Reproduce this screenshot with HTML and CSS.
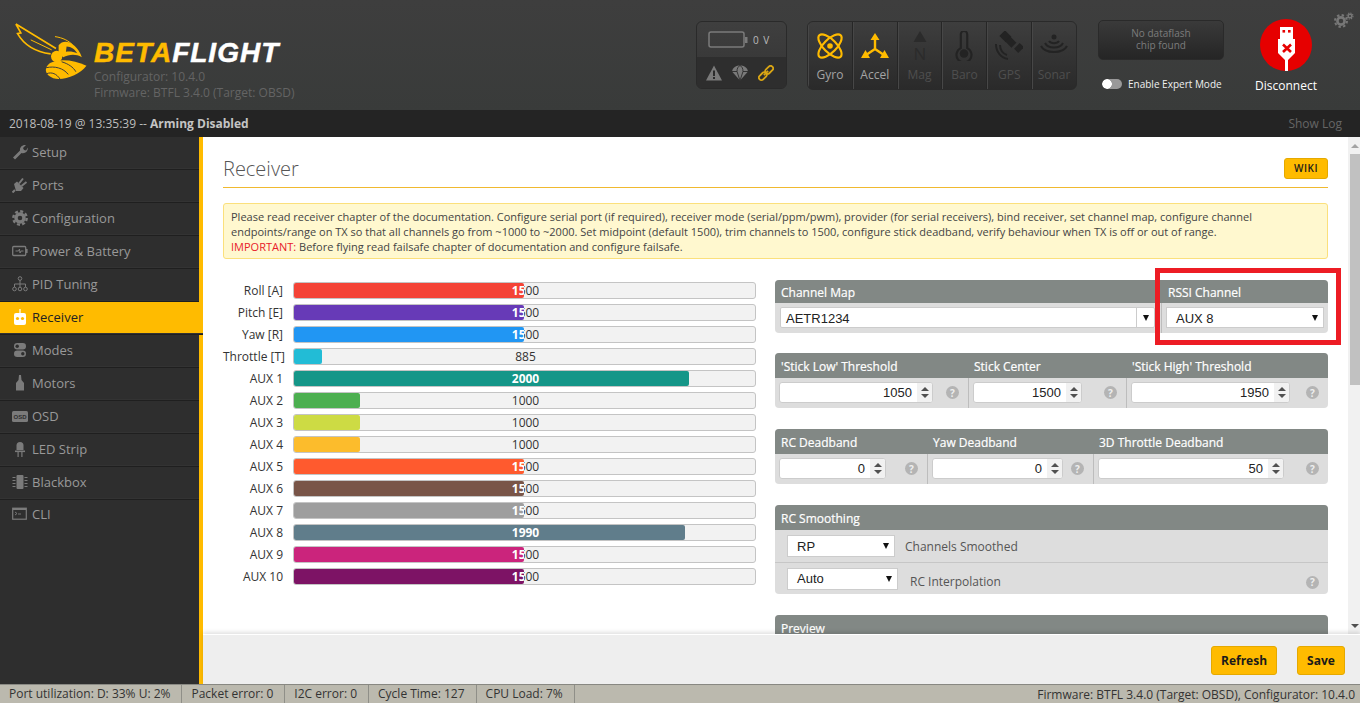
FILE: index.html
```html
<!DOCTYPE html>
<html lang="en">
<head>
    <title>Betaflight Configurator</title>
    <meta charset="UTF-8">
    <link rel="stylesheet" href="styles.css">
</head>
<body>
    <div class="header">
        <div class="brand">
            <svg class="bee" viewBox="36 60 240 190">
                <path d="M47 72 L168 146 M47 72 L62 99 L52 101 C70 132 105 156 152 162" fill="none" stroke="#ffbb00" stroke-width="5"/>
                <path d="M92 120 L155 150" fill="none" stroke="#ffbb00" stroke-width="3"/>
                <path d="M165 110 C190 114 205 122 218 135" fill="none" stroke="#ffbb00" stroke-width="3"/>
                <path d="M176 136 C195 112 232 132 246 172 C226 160 206 164 190 172 L176 160 Z" fill="#ffbb00"/>
                <path d="M200 140 C214 140 226 150 232 160 C220 155 208 154 198 156 Z" fill="#3b3c3c"/>
                <circle cx="170" cy="170" r="17" fill="#ffbb00"/>
                <path d="M150 190 C175 175 225 180 260 198 C240 225 190 245 160 236 C134 226 130 205 150 190 Z" fill="#ffbb00"/>
                <path d="M138 204 C165 198 190 205 205 224 M140 222 C155 216 170 222 180 238 M185 186 C205 192 220 202 228 216" fill="none" stroke="#3b3c3c" stroke-width="3"/>
            </svg>
            <div class="brand-text">
                <div class="wordmark"><span class="wordmark-beta">BETA</span>FLIGHT</div>
                <div class="brand-version">Configurator: 10.4.0</div>
                <div class="brand-version">Firmware: BTFL 3.4.0 (Target: OBSD)</div>
            </div>
        </div>

        <div class="power-box">
            <div class="power-top">
                <svg class="battery" viewBox="0 0 40 18">
                    <rect x="1" y="1" width="35" height="15" rx="2" fill="none" stroke="#7b7b7b" stroke-width="1.5"/>
                    <rect x="37" y="6" width="2.5" height="6" fill="#7b7b7b"/>
                </svg>
                <span class="volts">0 V</span>
            </div>
            <div class="power-bottom">
                <svg class="status-icon" viewBox="0 0 16 15">
                    <path d="M8 0 L16 15 L0 15 Z" fill="#7a7a7a"/>
                    <rect x="7" y="5" width="2" height="5.5" fill="#2c2c2c"/>
                    <rect x="7" y="11.5" width="2" height="2" fill="#2c2c2c"/>
                </svg>
                <svg class="status-icon" viewBox="0 0 16 15">
                    <path d="M0 6 C1 1 5 0 8 0 C11 0 15 1 16 6 L8 15 Z" fill="#7a7a7a"/>
                    <path d="M0 6 L5 6 L8 15 L11 6 L16 6 M5 6 C5 3 6 1 8 0 C10 1 11 3 11 6" fill="none" stroke="#2c2c2c" stroke-width="0.9"/>
                </svg>
                <svg class="status-icon" viewBox="0 0 16 16">
                    <g fill="none" stroke="#d9a514" stroke-width="1.8" transform="rotate(-45 8 8)">
                        <rect x="-1" y="5.5" width="9" height="5" rx="2.5"/>
                        <rect x="8" y="5.5" width="9" height="5" rx="2.5"/>
                        <path d="M5 8 L11 8"/>
                    </g>
                </svg>
            </div>
        </div>

        <div class="sensors">
            <div class="sensor sensor-on">
                <svg viewBox="0 0 26 26">
                    <g fill="none" stroke="#ffbb00" stroke-width="2">
                        <ellipse cx="13" cy="13" rx="14" ry="6" transform="rotate(45 13 13)"/>
                        <ellipse cx="13" cy="13" rx="14" ry="6" transform="rotate(-45 13 13)"/>
                    </g>
                    <circle cx="13" cy="13" r="2.6" fill="#ffbb00"/>
                </svg>
                <span>Gyro</span>
            </div>
            <div class="sensor sensor-on">
                <svg viewBox="0 0 28 26">
                    <path d="M14 16 L14 5 M14 16 L5 22 M14 16 L23 22" fill="none" stroke="#ffbb00" stroke-width="2.4"/>
                    <path d="M14 0 L18.5 7 L9.5 7 Z M0 25 L4.5 17 L9 25 Z M19 25 L23.5 17 L28 25 Z" fill="#ffbb00"/>
                </svg>
                <span>Accel</span>
            </div>
            <div class="sensor">
                <svg viewBox="0 0 26 30">
                    <path d="M13 0 L19.5 11 L6.5 11 Z" fill="#2b2b2b"/>
                    <text x="13" y="29" class="mag-letter">N</text>
                </svg>
                <span>Mag</span>
            </div>
            <div class="sensor">
                <svg viewBox="0 0 26 28">
                    <path d="M10 3 A3 3 0 0 1 16 3 L16 16 A7 7 0 1 1 10 16 Z" fill="none" stroke="#232323" stroke-width="2"/>
                    <circle cx="13" cy="21" r="4" fill="#232323"/>
                </svg>
                <span>Baro</span>
            </div>
            <div class="sensor">
                <svg viewBox="0 0 28 28">
                    <g fill="#232323">
                        <rect x="6" y="0" width="8" height="9" transform="rotate(-45 10 4)"/>
                        <rect x="20" y="13" width="8" height="6" transform="rotate(-45 24 16)"/>
                        <rect x="12" y="6" width="7" height="9" transform="rotate(-45 15 10)"/>
                    </g>
                    <path d="M1 12 C1 20 6 26 13 27 M5 13 C5 18 8 22 12 23" fill="none" stroke="#232323" stroke-width="2"/>
                </svg>
                <span>GPS</span>
            </div>
            <div class="sensor">
                <svg viewBox="0 0 28 24">
                    <circle cx="14" cy="3" r="2.5" fill="#232323"/>
                    <path d="M9 7 C11 10 17 10 19 7 M5 9 C8 15 20 15 23 9 M1 12 C5 20 23 20 27 12" fill="none" stroke="#232323" stroke-width="2"/>
                </svg>
                <span>Sonar</span>
            </div>
        </div>

        <div class="expert">
            <div class="dataflash">No dataflash<br>chip found</div>
            <div class="expert-row">
                <div class="switch"></div>
                <span>Enable Expert Mode</span>
            </div>
        </div>

        <div class="connect">
            <svg class="usb" viewBox="-26 -26 52 52">
                <circle r="26" fill="#e60000"/>
                <path d="M-6 -18 L7 -18 L7 -6 L-6 -6 Z" fill="#fff"/>
                <rect x="-3.5" y="-15" width="2.6" height="2.6" fill="#e60000"/>
                <rect x="2" y="-15" width="2.6" height="2.6" fill="#e60000"/>
                <path d="M-8 -6 L9 -6 L9 8 L2 15 L2 26 L-1 26 L-1 15 L-8 8 Z" fill="#fff"/>
                <path d="M-3 -0.5 L5 7 M5 -0.5 L-3 7" stroke="#e60000" stroke-width="2.6"/>
            </svg>
            <div class="connect-label">Disconnect</div>
        </div>

        <svg class="gears" viewBox="0 0 20 16">
            <circle cx="7" cy="9" r="3.6" fill="none" stroke="#777" stroke-width="2.6"/>
            <circle cx="7" cy="9" r="6" fill="none" stroke="#777" stroke-width="2" stroke-dasharray="2.4 2.3"/>
            <circle cx="16" cy="4" r="1.8" fill="none" stroke="#777" stroke-width="1.4"/>
            <circle cx="16" cy="4" r="3" fill="none" stroke="#777" stroke-width="1.1" stroke-dasharray="1.3 1.05"/>
        </svg>
    </div>

    <div class="log-bar">
        <div>2018-08-19 @ 13:35:39 -- <b class="log-state">Arming Disabled</b></div>
        <div class="show-log">Show Log</div>
    </div>

    <div class="main">
        <div class="sidebar">
            <div class="nav-item">
                <svg viewBox="0 0 16 16"><path d="M1 13.5 L8 6.5 C7.5 3 10.5 0.5 14 1 L11 4 L12 6 L14 6.5 L16 3.5 C16 7.5 13 10 9.5 9 L3 15.5 Z" fill="currentColor"/></svg>
                Setup
            </div>
            <div class="nav-item">
                <svg viewBox="0 0 16 16"><path d="M2 7 L5 4.5 L11.5 11 L9 14 L4 14 Z" fill="currentColor"/><path d="M3 13 L0.5 15.5 M7 6.5 L11 1.5 M9.5 9 L14.5 5" fill="none" stroke="currentColor" stroke-width="2"/></svg>
                Ports
            </div>
            <div class="nav-item">
                <svg viewBox="0 0 16 16"><circle cx="8" cy="8" r="4" fill="none" stroke="currentColor" stroke-width="3.4"/><circle cx="8" cy="8" r="6.7" fill="none" stroke="currentColor" stroke-width="2.4" stroke-dasharray="3 2.26"/></svg>
                Configuration
            </div>
            <div class="nav-item">
                <svg viewBox="0 0 16 16"><rect x="0.7" y="3.5" width="13" height="9" rx="1" fill="none" stroke="currentColor" stroke-width="1.3"/><rect x="14" y="6" width="1.6" height="4" fill="currentColor"/><path d="M3.5 8 L6.5 8 L7.5 6 L8 10 L9 8 L11.5 8" fill="none" stroke="currentColor"/></svg>
                Power &amp; Battery
            </div>
            <div class="nav-item">
                <svg viewBox="0 0 16 16" fill="none" stroke="currentColor"><circle cx="8" cy="2.5" r="1.8"/><circle cx="2.5" cy="13" r="1.8"/><circle cx="8" cy="13" r="1.8"/><circle cx="13.5" cy="13" r="1.8"/><path d="M8 4 L8 11 M2.5 11 L2.5 8 L13.5 8 L13.5 11"/></svg>
                PID Tuning
            </div>
            <div class="nav-item nav-active">
                <svg viewBox="0 0 16 16"><rect x="7.4" y="0" width="1.2" height="4" fill="#fff"/><rect x="2" y="4" width="12" height="12" rx="2" fill="#fff"/><circle cx="5.5" cy="9.5" r="1.6" fill="#ffbb00"/><circle cx="10.5" cy="9.5" r="1.6" fill="#ffbb00"/></svg>
                Receiver
            </div>
            <div class="nav-item">
                <svg viewBox="0 0 16 16"><rect x="2" y="1" width="12" height="6.5" rx="3.2" fill="currentColor"/><rect x="2" y="8.5" width="12" height="6.5" rx="3.2" fill="currentColor"/><circle cx="5.2" cy="4.2" r="1.7" fill="#2e2e2e"/><circle cx="10.8" cy="11.8" r="1.7" fill="#2e2e2e"/></svg>
                Modes
            </div>
            <div class="nav-item">
                <svg viewBox="0 0 16 16"><path d="M7 0 L9 0 L9.5 5 L12 8 L12 15.5 L4 15.5 L4 8 L6.5 5 Z" fill="currentColor"/></svg>
                Motors
            </div>
            <div class="nav-item">
                <svg class="osd-icon" viewBox="0 0 16 11"><rect width="16" height="11" rx="1.5" fill="currentColor"/><text x="8" y="8" class="osd-letters">OSD</text></svg>
                OSD
            </div>
            <div class="nav-item">
                <svg viewBox="0 0 16 16"><path d="M4.5 9 L4.5 4.5 A3.5 3.5 0 0 1 11.5 4.5 L11.5 9 Z" fill="currentColor"/><rect x="3" y="9.5" width="10" height="1.6" fill="currentColor"/><rect x="5.5" y="11" width="1.2" height="5" fill="currentColor"/><rect x="9.3" y="11" width="1.2" height="5" fill="currentColor"/></svg>
                LED Strip
            </div>
            <div class="nav-item">
                <svg viewBox="0 0 16 16"><rect x="4.5" y="1" width="7" height="14" rx="1" fill="currentColor"/><path d="M0.5 3.5 L3.5 3.5 M0.5 6.5 L3.5 6.5 M0.5 9.5 L3.5 9.5 M0.5 12.5 L3.5 12.5 M12.5 3.5 L15.5 3.5 M12.5 6.5 L15.5 6.5 M12.5 9.5 L15.5 9.5 M12.5 12.5 L15.5 12.5" stroke="currentColor"/></svg>
                Blackbox
            </div>
            <div class="nav-item">
                <svg viewBox="0 0 16 16"><rect x="0.7" y="2.2" width="13.6" height="11" fill="none" stroke="currentColor" stroke-width="1.2"/><rect x="1" y="2" width="13" height="2" fill="currentColor"/><path d="M3 6 L5 7.5 L3 9 M6 8 L9 8" fill="none" stroke="currentColor" stroke-width="0.9"/></svg>
                CLI
            </div>
        </div>

        <div class="tab">
            <div class="tab-scroll">
                <div class="content">
                    <div class="title-row">
                        <div class="title">Receiver</div>
                        <div class="btn btn-wiki">WIKI</div>
                    </div>
                    <div class="notice">
                        Please read receiver chapter of the documentation. Configure serial port (if required), receiver mode (serial/ppm/pwm), provider (for serial receivers), bind receiver, set channel map, configure channel endpoints/range on TX so that all channels go from ~1000 to ~2000. Set midpoint (default 1500), trim channels to 1500, configure stick deadband, verify behaviour when TX is off or out of range.<br>
                        <span class="important">IMPORTANT:</span> Before flying read failsafe chapter of documentation and configure failsafe.
                    </div>

                    <div class="columns">
                        <!-- Channel bars -->
                        <div class="bars">
                            <div class="bar-row"><div class="bar-name">Roll [A]</div><div class="meter"><div class="meter-value">1500</div><div class="meter-fill" style="width:49.8%;background:#f44336"><div class="meter-value">1500</div></div></div></div>
                            <div class="bar-row"><div class="bar-name">Pitch [E]</div><div class="meter"><div class="meter-value">1500</div><div class="meter-fill" style="width:49.8%;background:#673ab7"><div class="meter-value">1500</div></div></div></div>
                            <div class="bar-row"><div class="bar-name">Yaw [R]</div><div class="meter"><div class="meter-value">1500</div><div class="meter-fill" style="width:49.8%;background:#2196f3"><div class="meter-value">1500</div></div></div></div>
                            <div class="bar-row"><div class="bar-name">Throttle [T]</div><div class="meter"><div class="meter-value">885</div><div class="meter-fill" style="width:6%;background:#22bcd6"></div></div></div>
                            <div class="bar-row"><div class="bar-name">AUX 1</div><div class="meter"><div class="meter-value">2000</div><div class="meter-fill" style="width:85.6%;background:#159688"><div class="meter-value">2000</div></div></div></div>
                            <div class="bar-row"><div class="bar-name">AUX 2</div><div class="meter"><div class="meter-value">1000</div><div class="meter-fill" style="width:14.4%;background:#4caf50"></div></div></div>
                            <div class="bar-row"><div class="bar-name">AUX 3</div><div class="meter"><div class="meter-value">1000</div><div class="meter-fill" style="width:14.4%;background:#cddb44"></div></div></div>
                            <div class="bar-row"><div class="bar-name">AUX 4</div><div class="meter"><div class="meter-value">1000</div><div class="meter-fill" style="width:14.4%;background:#fcbc2c"></div></div></div>
                            <div class="bar-row"><div class="bar-name">AUX 5</div><div class="meter"><div class="meter-value">1500</div><div class="meter-fill" style="width:49.8%;background:#ff5a2e"><div class="meter-value">1500</div></div></div></div>
                            <div class="bar-row"><div class="bar-name">AUX 6</div><div class="meter"><div class="meter-value">1500</div><div class="meter-fill" style="width:49.8%;background:#795548"><div class="meter-value">1500</div></div></div></div>
                            <div class="bar-row"><div class="bar-name">AUX 7</div><div class="meter"><div class="meter-value">1500</div><div class="meter-fill" style="width:49.8%;background:#9e9e9e"><div class="meter-value">1500</div></div></div></div>
                            <div class="bar-row"><div class="bar-name">AUX 8</div><div class="meter"><div class="meter-value">1990</div><div class="meter-fill" style="width:84.9%;background:#607d8b"><div class="meter-value">1990</div></div></div></div>
                            <div class="bar-row"><div class="bar-name">AUX 9</div><div class="meter"><div class="meter-value">1500</div><div class="meter-fill" style="width:49.8%;background:#cb247c"><div class="meter-value">1500</div></div></div></div>
                            <div class="bar-row"><div class="bar-name">AUX 10</div><div class="meter"><div class="meter-value">1500</div><div class="meter-fill" style="width:49.8%;background:#7d1365"><div class="meter-value">1500</div></div></div></div>
                        </div>

                        <!-- Settings panels -->
                        <div class="settings">
                            <div class="panel panel-map">
                                <div class="col">
                                    <div class="col-head head-short">Channel Map</div>
                                    <div class="col-body body-short">
                                        <div class="select select-map"><span>AETR1234</span><div class="select-arrow arrow-split"></div></div>
                                    </div>
                                </div>
                                <div class="col">
                                    <div class="col-head head-short">RSSI Channel</div>
                                    <div class="col-body body-short">
                                        <div class="select select-rssi"><span>AUX 8</span><div class="select-arrow"></div></div>
                                    </div>
                                </div>
                            </div>
                            <div class="rssi-mark"></div>

                            <div class="panel panel-thresholds">
                                <div class="col">
                                    <div class="col-head">'Stick Low' Threshold</div>
                                    <div class="col-body">
                                        <div class="number num-154"><span>1050</span><div class="spin"><i class="spin-up"></i><i class="spin-down"></i></div></div>
                                        <div class="help">?</div>
                                    </div>
                                </div>
                                <div class="col">
                                    <div class="col-head">Stick Center</div>
                                    <div class="col-body">
                                        <div class="number num-109"><span>1500</span><div class="spin"><i class="spin-up"></i><i class="spin-down"></i></div></div>
                                        <div class="help">?</div>
                                    </div>
                                </div>
                                <div class="col">
                                    <div class="col-head">'Stick High' Threshold</div>
                                    <div class="col-body">
                                        <div class="number num-159"><span>1950</span><div class="spin"><i class="spin-up"></i><i class="spin-down"></i></div></div>
                                        <div class="help">?</div>
                                    </div>
                                </div>
                            </div>

                            <div class="panel panel-deadbands">
                                <div class="col">
                                    <div class="col-head">RC Deadband</div>
                                    <div class="col-body">
                                        <div class="number num-107"><span>0</span><div class="spin"><i class="spin-up"></i><i class="spin-down"></i></div></div>
                                        <div class="help">?</div>
                                    </div>
                                </div>
                                <div class="col">
                                    <div class="col-head">Yaw Deadband</div>
                                    <div class="col-body">
                                        <div class="number num-131"><span>0</span><div class="spin"><i class="spin-up"></i><i class="spin-down"></i></div></div>
                                        <div class="help">?</div>
                                    </div>
                                </div>
                                <div class="col">
                                    <div class="col-head">3D Throttle Deadband</div>
                                    <div class="col-body">
                                        <div class="number num-186"><span>50</span><div class="spin"><i class="spin-up"></i><i class="spin-down"></i></div></div>
                                        <div class="help">?</div>
                                    </div>
                                </div>
                            </div>

                            <div class="panel panel-stack">
                                <div class="col-head">RC Smoothing</div>
                                <div class="smooth-row smooth-first">
                                    <div class="select select-rp"><span>RP</span><div class="select-arrow"></div></div>
                                    <div class="smooth-label">Channels Smoothed</div>
                                </div>
                                <div class="smooth-row">
                                    <div class="select select-auto"><span>Auto</span><div class="select-arrow"></div></div>
                                    <div class="smooth-label smooth-label-low">RC Interpolation</div>
                                    <div class="help help-end">?</div>
                                </div>
                            </div>

                            <div class="panel panel-stack panel-preview">
                                <div class="col-head">Preview</div>
                            </div>
                        </div>
                    </div>
                </div>

                <div class="scrollbar">
                    <div class="scroll-up"></div>
                    <div class="scroll-thumb"></div>
                    <div class="scroll-down"></div>
                </div>
            </div>

            <div class="toolbar">
                <div class="btn btn-refresh">Refresh</div>
                <div class="btn btn-save">Save</div>
            </div>
        </div>
    </div>

    <div class="status-bar">
        <div class="status-cell">Port utilization: D: 33% U: 2%</div>
        <div class="status-cell">Packet error: 0</div>
        <div class="status-cell">I2C error: 0</div>
        <div class="status-cell">Cycle Time: 127</div>
        <div class="status-cell">CPU Load: 7%</div>
        <div class="status-version">Firmware: BTFL 3.4.0 (Target: OBSD), Configurator: 10.4.0</div>
    </div>
</body>
</html>
```

FILE: styles.css
```css
html, body {
    height: 100%;
    margin: 0;
    overflow: hidden;
    font-family: "Open Sans", Arial, sans-serif;
    font-size: 12px;
    color: #333;
    background-color: #fff;
}
body {
    display: flex;
    flex-direction: column;
}

/* Top header */
.header {
    position: relative;
    display: flex;
    align-items: flex-start;
    height: 110px;
    flex: none;
    background: linear-gradient(#3e3e3e, #393b3a);
}
.brand {
    display: flex;
    width: 684px;
    margin-left: 12px;
    padding-top: 20px;
}
.bee {
    width: 80px;
    height: 63px;
    flex: none;
}
.brand-text {
    margin-left: 2px;
    padding-top: 19px;
}
.wordmark {
    font-family: "Liberation Sans", Arial, sans-serif;
    font-size: 28px;
    line-height: 28px;
    font-weight: bold;
    font-style: italic;
    letter-spacing: 1px;
    color: #fff;
    -webkit-text-stroke: 0.5px currentColor;
}
.wordmark-beta {
    color: #ffbb00;
}
.brand-version {
    font-size: 12px;
    line-height: 16px;
    color: #646464;
}
.wordmark + .brand-version {
    margin-top: 2px;
}

.power-box {
    width: 91px;
    height: 68px;
    margin-top: 21px;
    border: 1px solid #2a2a2a;
    border-radius: 6px;
    box-sizing: border-box;
    overflow: hidden;
    background: linear-gradient(#3f3f3f, #343434);
}
.power-top {
    display: flex;
    align-items: center;
    height: 35px;
    padding-left: 11px;
    gap: 5px;
}
.battery {
    width: 40px;
    height: 18px;
}
.volts {
    font-size: 10px;
    letter-spacing: 1px;
    color: #bbb;
}
.power-bottom {
    display: flex;
    align-items: center;
    justify-content: space-between;
    height: 32px;
    padding: 0 12px 0 9px;
    background-color: #2e2e2e;
}
.status-icon {
    width: 16px;
    height: 16px;
}

.sensors {
    display: flex;
    width: 270px;
    height: 69px;
    margin: 21px 0 0 20px;
    border: 1px solid #2a2a2a;
    border-radius: 6px;
    box-sizing: border-box;
    overflow: hidden;
    background: linear-gradient(#3e3e3e, #2a2a2a);
}
.sensor {
    display: flex;
    flex-direction: column;
    align-items: center;
    flex: 1;
    padding-top: 9px;
    border-right: 1px solid #262626;
    box-shadow: inset 1px 0 0 #474747;
    color: #4e4e4e;
}
.sensor:last-child {
    border-right: none;
}
.sensor svg {
    width: 28px;
    height: 30px;
}
.sensor span {
    margin-top: 6px;
    font-size: 12px;
    line-height: 16px;
}
.sensor-on {
    color: #a4a4a4;
}
.mag-letter {
    font-family: "Open Sans", Arial, sans-serif;
    font-size: 17px;
    text-anchor: middle;
    fill: #2b2b2b;
}

.expert {
    width: 126px;
    margin: 20px 0 0 21px;
}
.dataflash {
    height: 40px;
    box-sizing: border-box;
    padding-top: 6px;
    border: 1px solid #2a2a2a;
    border-radius: 5px;
    background: linear-gradient(#3a3a3a, #252525);
    font-size: 10px;
    line-height: 12px;
    text-align: center;
    color: #7c7c7c;
}
.expert-row {
    display: flex;
    align-items: center;
    gap: 6px;
    margin: 18px 0 0 4px;
    font-size: 10px;
    line-height: 12px;
    white-space: nowrap;
    color: #f0f0f0;
}
.switch {
    width: 20px;
    height: 10px;
    border-radius: 5px;
    background-color: #999;
    background-image: radial-gradient(circle at 5px 5px, #fff 4.5px, transparent 5px);
}
.connect {
    display: flex;
    flex-direction: column;
    align-items: center;
    width: 80px;
    margin: 19px 0 0 22px;
}
.usb {
    width: 52px;
    height: 52px;
}
.connect-label {
    margin-top: 7px;
    font-size: 12px;
    line-height: 16px;
    color: #fff;
}
.gears {
    position: absolute;
    top: 12px;
    right: 6px;
    width: 20px;
    height: 16px;
}

/* Log bar */
.log-bar {
    display: flex;
    align-items: center;
    justify-content: space-between;
    flex: none;
    height: 27px;
    padding: 0 18px 0 9px;
    background-color: #242424;
    color: #bdbdbd;
}
.log-state {
    color: #c4c4c4;
}
.show-log {
    color: #666;
}

.main {
    display: flex;
    flex: 1;
    min-height: 0;
}

/* Sidebar */
.sidebar {
    width: 199px;
    flex: none;
    border-right: 4px solid #ffbb00;
    background-color: #2e2e2e;
}
.nav-item {
    display: flex;
    align-items: center;
    height: 33px;
    box-sizing: border-box;
    padding: 0 0 2px 12px;
    gap: 4px;
    font-size: 13px;
    color: #999;
    border-bottom: 1px solid #1f1f1f;
    box-shadow: inset 0 -1px 0 #333;
}
.nav-item:last-child {
    padding-bottom: 5px;
    border-bottom: none;
    box-shadow: none;
}
.nav-item svg {
    width: 16px;
    height: 16px;
    color: #7b7b7b;
}
.nav-item .osd-icon {
    height: 11px;
}
.osd-letters {
    font-family: "Liberation Sans", Arial, sans-serif;
    font-size: 6px;
    font-weight: bold;
    text-anchor: middle;
    fill: #2e2e2e;
}
.nav-active {
    background-color: #ffbb00;
    color: #222;
    margin-right: -4px;
}

/* Tab */
.tab {
    display: flex;
    flex-direction: column;
    flex: 1;
    min-width: 0;
}
.tab-scroll {
    display: flex;
    flex: 1;
    min-height: 0;
}
.content {
    flex: 1;
    min-width: 0;
    overflow: hidden;
    padding: 0 20px;
}
.title-row {
    display: flex;
    align-items: center;
    justify-content: space-between;
    height: 50px;
    border-bottom: 1px solid #f0b92f;
}
.title {
    padding-top: 12px;
    font-size: 20px;
    font-weight: 300;
    color: #555;
}
.btn {
    display: flex;
    align-items: center;
    justify-content: center;
    box-sizing: border-box;
    border: 1px solid #e5a900;
    border-radius: 3px;
    background-color: #ffbb00;
    font-weight: bold;
    color: #1a1a1a;
}
.btn-wiki {
    width: 44px;
    height: 21px;
    margin-top: 12px;
    font-size: 10px;
    font-weight: 600;
    letter-spacing: 0.5px;
}
.notice {
    height: 56px;
    margin-top: 15px;
    padding: 5px 7px;
    box-sizing: border-box;
    border: 1px solid #fbe07c;
    border-radius: 3px;
    background-color: #fff8cf;
    font-size: 11px;
    line-height: 15px;
    color: #444;
}
.important {
    color: #e8202a;
}
.columns {
    display: flex;
    gap: 19px;
    margin-top: 21px;
}

/* Bars */
.bars {
    width: 533px;
    flex: none;
    padding-top: 1px;
}
.bar-row {
    display: flex;
    align-items: center;
    height: 22px;
}
.bar-name {
    width: 60px;
    margin: 0 10px 4px 0;
    flex: none;
    text-align: right;
    white-space: nowrap;
    color: #333;
}
.meter {
    position: relative;
    width: 463px;
    height: 17px;
    margin-bottom: 4px;
    box-sizing: border-box;
    border: 1px solid #c4c4c4;
    border-radius: 3px;
    background-color: #f2f2f2;
}
.meter-value {
    width: 461px;
    padding-left: 2px;
    box-sizing: border-box;
    line-height: 15px;
    text-align: center;
    color: #333;
}
.meter-fill {
    position: absolute;
    top: 0;
    left: 0;
    height: 15px;
    overflow: hidden;
    border-radius: 2px;
}
.meter-fill .meter-value {
    color: #fff;
    font-weight: bold;
}

/* Settings panels */
.settings {
    position: relative;
    width: 553px;
    flex: none;
}
.panel {
    display: grid;
    margin-bottom: 20px;
    border-radius: 4px;
    overflow: hidden;
    background-color: #dddddd;
}
.panel-map {
    grid-template-columns: 386px 167px;
}
.panel-thresholds {
    grid-template-columns: 193px 158px 202px;
}
.panel-deadbands {
    grid-template-columns: 152px 166px 235px;
    margin-top: 21px;
}
.panel-stack {
    display: block;
    margin-top: 21px;
}
.col + .col {
    box-shadow: inset 1px 0 0 #bdbdbd;
}
.col-head {
    height: 25px;
    padding-left: 6px;
    font-size: 12px;
    line-height: 27px;
    color: #fff;
    -webkit-text-stroke: 0.2px #fff;
    background-color: #828885;
}
.col + .col .col-head {
    padding-left: 6px;
}
.panel-map .col + .col .col-head {
    padding-left: 7px;
}
.head-short {
    height: 23px;
    line-height: 25px;
}
.col-body {
    display: flex;
    align-items: center;
    justify-content: space-between;
    height: 30px;
    padding: 0 9px 1px 4px;
    box-sizing: border-box;
}
.col + .col .col-body {
    padding-left: 5px;
}
.col-body.body-short {
    justify-content: flex-start;
    align-items: flex-start;
    height: 30px;
    padding: 4px 0 0 5px;
}
.select,
.number {
    display: flex;
    align-items: center;
    height: 21px;
    box-sizing: border-box;
    border: 1px solid #ccc;
    background-color: #fff;
    font-family: "Liberation Sans", Arial, sans-serif;
    font-size: 13px;
    color: #222;
}
.select span {
    flex: 1;
}
.select-arrow {
    display: flex;
    align-items: center;
    justify-content: center;
    width: 17px;
    height: 100%;
}
.select-arrow::after {
    content: "";
    border-top: 6px solid #111;
    border-left: 3px solid transparent;
    border-right: 3px solid transparent;
}
.arrow-split {
    border-left: 1px solid #ccc;
}
.select-map {
    width: 375px;
    border-radius: 2px;
}
.select-map span {
    padding: 1px 0 0 5px;
}
.select-rssi {
    width: 158px;
}
.select-rssi span {
    padding: 1px 0 0 9px;
}
.select-rp {
    width: 108px;
    height: 22px;
    margin-top: -1px;
}
.select-auto {
    width: 111px;
    height: 22px;
}
.select-rp span,
.select-auto span {
    padding-left: 9px;
}
.number {
    border-radius: 3px;
}
.number span {
    flex: 1;
    padding-right: 5px;
    text-align: right;
}
.num-154 { width: 154px; }
.num-109 { width: 109px; }
.num-159 { width: 159px; }
.num-107 { width: 107px; }
.num-131 { width: 131px; }
.num-186 { width: 186px; }
.spin {
    display: flex;
    flex-direction: column;
    align-items: center;
    justify-content: center;
    gap: 3px;
    width: 15px;
    height: 100%;
    background-color: #f1f1f1;
    border-radius: 0 2px 2px 0;
}
.spin i {
    display: block;
    border-left: 4px solid transparent;
    border-right: 4px solid transparent;
}
.spin-up {
    border-bottom: 4px solid #505050;
}
.spin-down {
    border-top: 4px solid #505050;
}
.help {
    display: flex;
    align-items: center;
    justify-content: center;
    width: 13px;
    height: 13px;
    flex: none;
    border-radius: 50%;
    background-color: #b4b4b4;
    font-size: 10px;
    font-weight: bold;
    color: #eee;
}
.smooth-row {
    display: flex;
    align-items: center;
    height: 31px;
    padding: 0 9px 0 12px;
    color: #555;
}
.smooth-row.smooth-first {
    height: 33px;
    padding-top: 1px;
    box-sizing: border-box;
    border-bottom: 1px solid #c6c6c6;
}
.smooth-label {
    margin-left: 10px;
}
.smooth-label-low {
    margin-left: 12px;
    padding-top: 6px;
}
.help-end {
    margin: 7px 0 0 auto;
}
.panel-preview {
    height: 60px;
    margin-bottom: 0;
}
.rssi-mark {
    position: absolute;
    top: -12px;
    left: 380px;
    width: 186px;
    height: 77px;
    box-sizing: border-box;
    border: 5px solid #ed1c24;
}

/* Fake scrollbar */
.scrollbar {
    position: relative;
    width: 12px;
    flex: none;
    background-color: #f1f1f1;
}
.scroll-thumb {
    position: absolute;
    top: 17px;
    left: 2px;
    right: 0;
    height: 231px;
    background-color: #c1c1c1;
}
.scroll-up,
.scroll-down {
    position: absolute;
    left: 3px;
    border-left: 4px solid transparent;
    border-right: 4px solid transparent;
}
.scroll-up {
    top: 7px;
    border-bottom: 4px solid #a3a3a3;
}
.scroll-down {
    bottom: 6px;
    border-top: 4px solid #505050;
}

/* Bottom toolbar */
.toolbar {
    position: relative;
    display: flex;
    align-items: flex-start;
    justify-content: flex-end;
    gap: 20px;
    height: 50px;
    flex: none;
    box-sizing: border-box;
    padding: 11px 15px 0 0;
    background-color: #eeeeee;
    border-top: 1px solid #fff;
    box-shadow: 0 -2px 4px rgba(0, 0, 0, 0.12);
}
.btn-refresh {
    width: 66px;
    height: 29px;
}
.btn-save {
    width: 48px;
    height: 29px;
}

/* Status bar */
.status-bar {
    display: flex;
    align-items: center;
    flex: none;
    height: 19px;
    box-sizing: border-box;
    border-top: 1px solid #8a8a84;
    background-color: #bbb9ae;
    font-size: 12px;
    color: #333;
}
.status-cell {
    height: 100%;
    padding: 0 11px 0 9px;
    line-height: 18px;
    border-right: 1px solid #8f8f88;
}
.status-version {
    margin-left: auto;
    padding-right: 5px;
}
```
